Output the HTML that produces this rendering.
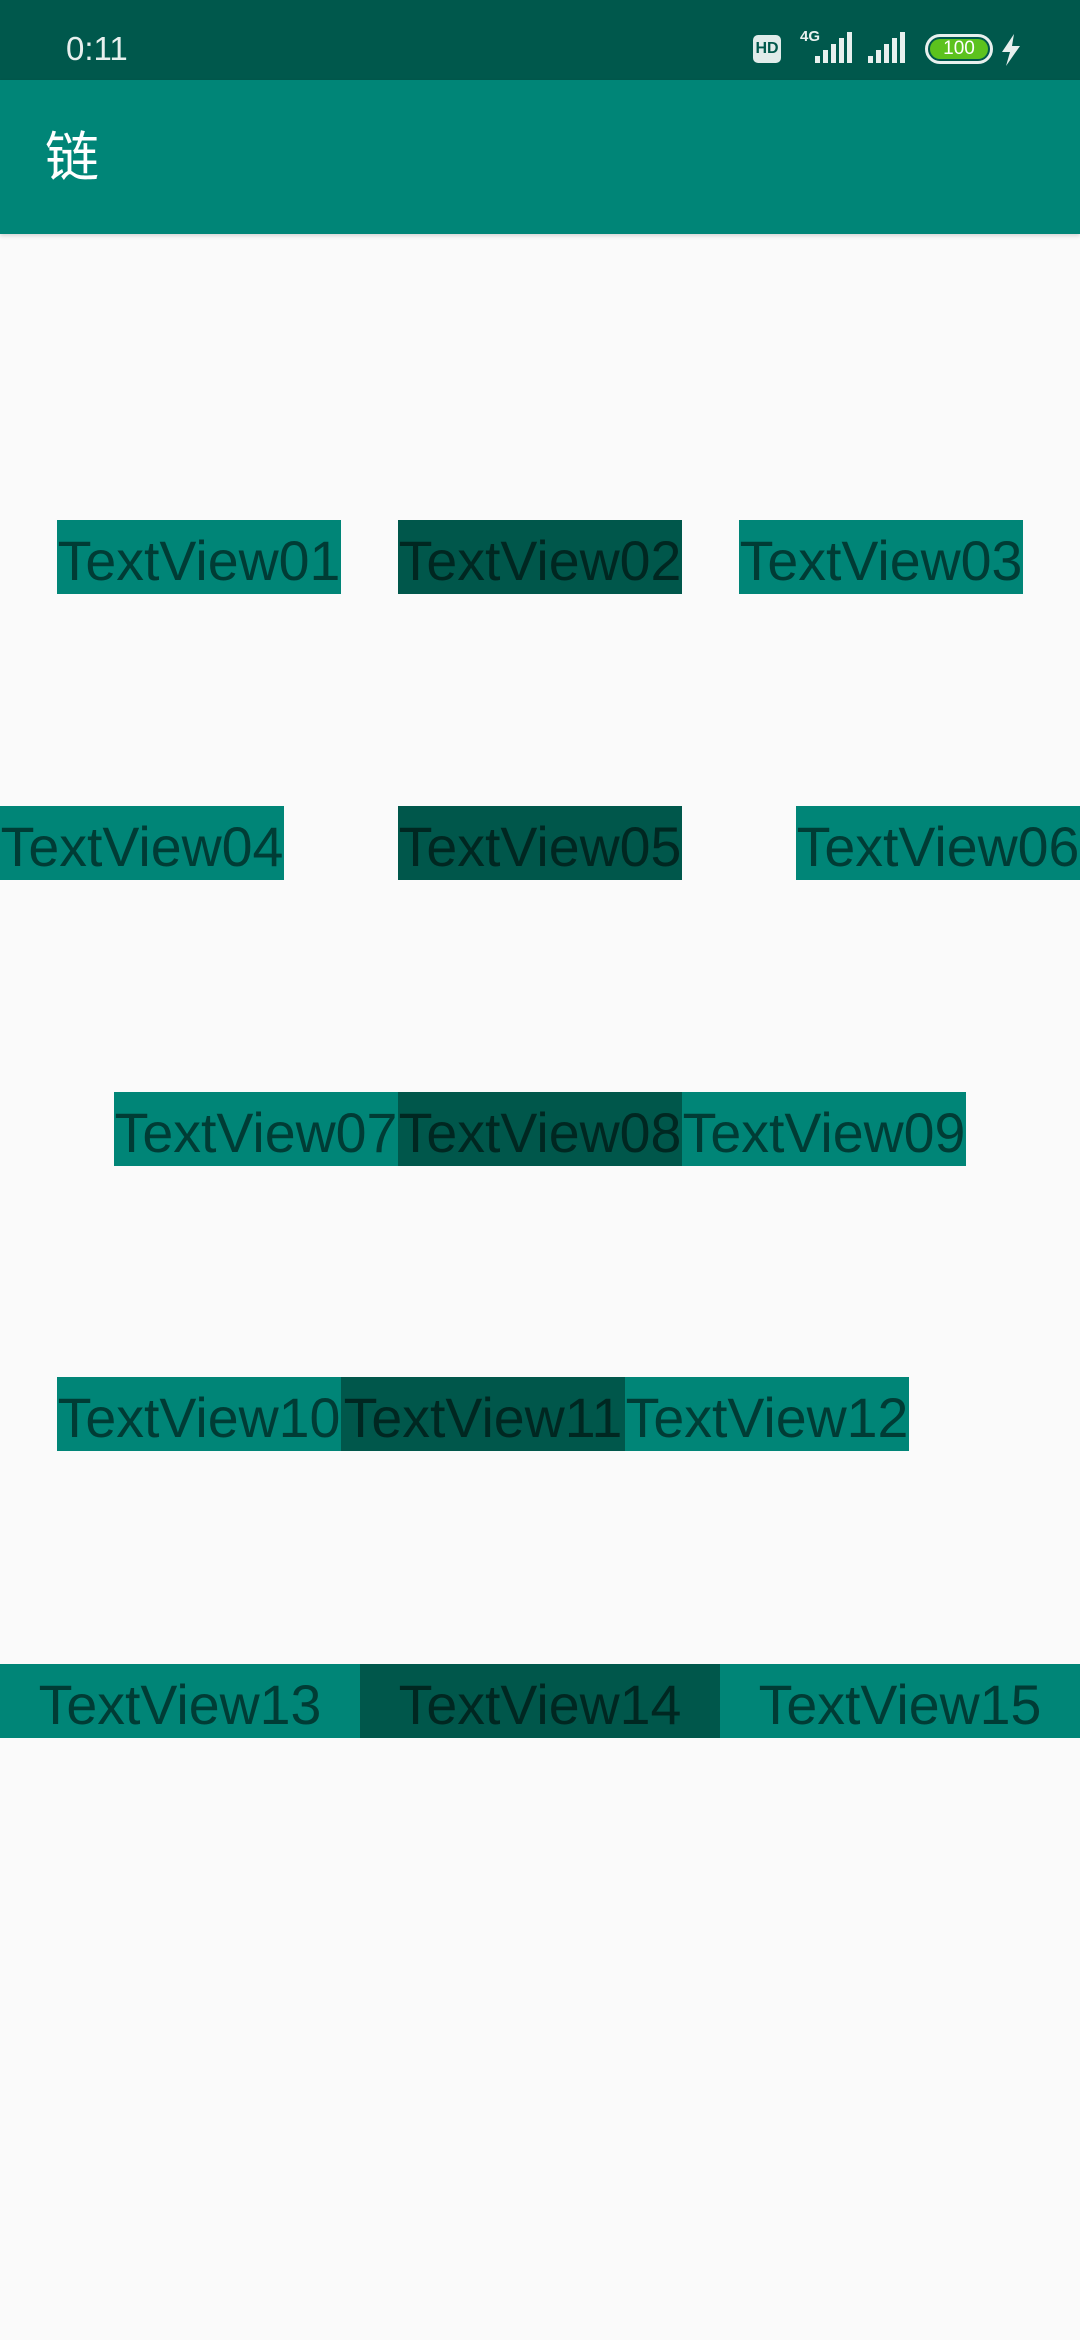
<!DOCTYPE html>
<html><head><meta charset="utf-8">
<style>
*{margin:0;padding:0;box-sizing:border-box}
html,body{width:1080px;height:2340px;background:#fafafa;overflow:hidden;font-family:"Liberation Sans","Noto Sans CJK SC",sans-serif;position:relative}
.sb{position:absolute;left:0;top:0;width:1080px;height:80px;background:#00584c}
.ab{position:absolute;left:0;top:80px;width:1080px;height:154px;background:#008577;box-shadow:0 2px 4px rgba(0,0,0,0.15)}
.t{position:absolute;height:74px;line-height:82px;font-size:55.5px;color:rgba(0,0,0,0.55);white-space:nowrap;overflow:visible;text-align:center}
.l{background:#008577}.d{background:#00574b}
</style></head><body>
<div class="sb">
  <div style="position:absolute;left:66px;top:30px;color:#e8f0ee;font-size:33px">0:11</div>
  <div style="position:absolute;left:753px;top:35px;width:28px;height:28px;background:#e0ecea;border-radius:5px;color:#00584c;font-size:16px;font-weight:bold;line-height:28px;text-align:center">HD</div>
  <div style="position:absolute;left:800px;top:28px;color:#e8f0ee;font-size:15px;font-weight:bold">4G</div>
  <svg style="position:absolute;left:815px;top:32px" width="150" height="34">
    <g fill="#e8f0ee">
      <rect x="0" y="24" width="5" height="7"/><rect x="8" y="18" width="5" height="13"/><rect x="16" y="12" width="5" height="19"/><rect x="24" y="6" width="5" height="25"/><rect x="32" y="0" width="5" height="31"/>
      <rect x="53" y="24" width="5" height="7"/><rect x="61" y="18" width="5" height="13"/><rect x="69" y="12" width="5" height="19"/><rect x="77" y="6" width="5" height="25"/><rect x="85" y="0" width="5" height="31"/>
    </g>
  </svg>
  <div style="position:absolute;left:925px;top:34px;width:68px;height:30px;border:3px solid #e8f0ee;border-radius:15px;padding:2px">
    <div style="width:100%;height:100%;background:#5cc21e;border-radius:11px;color:#fff;font-size:19px;line-height:20px;text-align:center">100</div>
  </div>
  <svg style="position:absolute;left:1000px;top:34px" width="22" height="32"><path d="M14 0 L2 18 L10 18 L6 32 L20 12 L12 12 Z" fill="#e8f0ee"/></svg>
</div>
<div class="ab"><div style="position:absolute;left:45px;top:46px;color:#fff;font-size:54px;line-height:64px">链</div></div>

<div class="t l" style="left:57px;top:520px;width:284px">TextView01</div>
<div class="t d" style="left:398px;top:520px;width:284px">TextView02</div>
<div class="t l" style="left:739px;top:520px;width:284px">TextView03</div>

<div class="t l" style="left:0;top:806px;width:284px">TextView04</div>
<div class="t d" style="left:398px;top:806px;width:284px">TextView05</div>
<div class="t l" style="left:796px;top:806px;width:284px">TextView06</div>

<div class="t l" style="left:114px;top:1092px;width:284px">TextView07</div>
<div class="t d" style="left:398px;top:1092px;width:284px">TextView08</div>
<div class="t l" style="left:682px;top:1092px;width:284px">TextView09</div>

<div class="t l" style="left:57px;top:1377px;width:284px">TextView10</div>
<div class="t d" style="left:341px;top:1377px;width:284px">TextView11</div>
<div class="t l" style="left:625px;top:1377px;width:284px">TextView12</div>

<div class="t l" style="left:0;top:1664px;width:360px">TextView13</div>
<div class="t d" style="left:360px;top:1664px;width:360px">TextView14</div>
<div class="t l" style="left:720px;top:1664px;width:360px">TextView15</div>
</body></html>
